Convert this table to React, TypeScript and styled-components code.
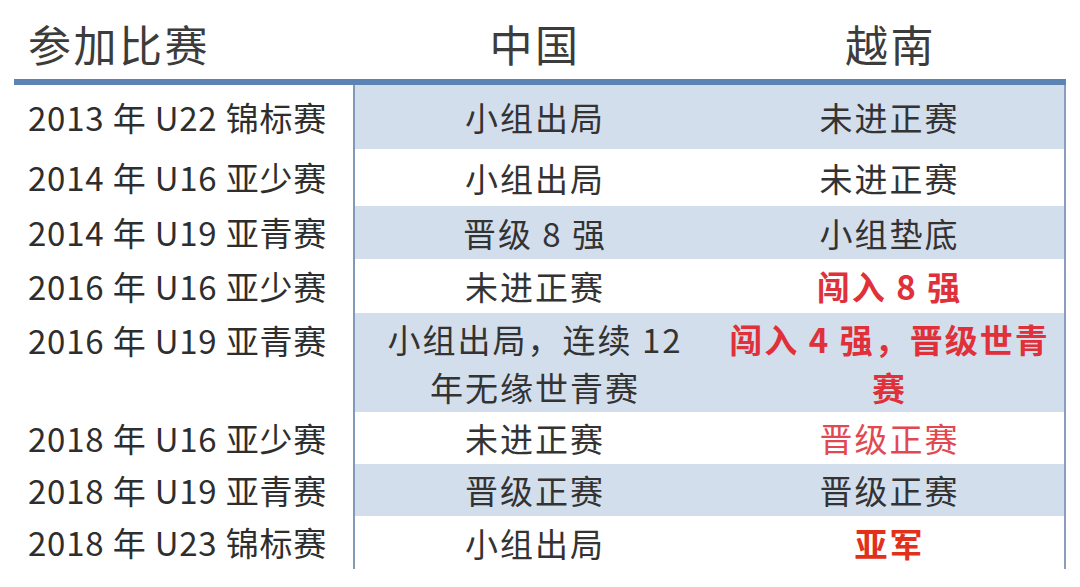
import React from "react";
import styled, { createGlobalStyle } from "styled-components";

const Global = createGlobalStyle`
  html, body { margin: 0; padding: 0; background: #ffffff; }
  body {
    font-family: "Noto Sans CJK SC", "Noto Sans", sans-serif;
    color: #333;
  }
`;

const Table = styled.div`
  margin-left: 14px;
  width: 1052px;
  display: grid;
  grid-template-columns: 341px 360px 351px;
`;

const HeadCell = styled.div<{ $align: "left" | "center" }>`
  height: 79px;
  display: flex;
  align-items: center;
  justify-content: ${(p) => (p.$align === "left" ? "flex-start" : "center")};
  padding-left: ${(p) => (p.$align === "left" ? "14px" : "0")};
  padding-top: 6px;
  box-sizing: border-box;
  font-size: 43px;
  color: #3c3c3c;
  letter-spacing: 2.5px;
`;

const Rule = styled.div`
  grid-column: 1 / span 3;
  height: 6px;
  background: #5b83b4;
`;

const LabelCell = styled.div<{ $h: number; $top?: boolean }>`
  height: ${(p) => p.$h}px;
  display: flex;
  align-items: ${(p) => (p.$top ? "flex-start" : "center")};
  padding-left: 14px;
  padding-top: ${(p) => (p.$top ? "6px" : "0")};
  box-sizing: border-box;
  font-size: 33px;
  letter-spacing: 0.8px;
  line-height: 43px;
  color: #2e2e2e;
  white-space: nowrap;
  border-right: 2px solid #8399b8;
`;

const DataCell = styled.div<{ $h: number; $band: boolean; $last?: boolean }>`
  height: ${(p) => p.$h}px;
  display: flex;
  flex-direction: column;
  align-items: center;
  justify-content: center;
  text-align: center;
  box-sizing: border-box;
  background: ${(p) => (p.$band ? "#d3deed" : "#ffffff")};
  border-right: ${(p) => (p.$last ? "2px solid #8a9dba" : "none")};
  font-size: 33px;
  letter-spacing: 2px;
  line-height: 48px;
  white-space: nowrap;
`;

const Txt = styled.span<{ $tone?: "red" | "pink" | "orange" }>`
  display: block;
  color: ${(p) =>
    p.$tone === "red"
      ? "#e0303a"
      : p.$tone === "pink"
      ? "#e24850"
      : p.$tone === "orange"
      ? "#e2311b"
      : "#333333"};
  font-weight: ${(p) => (p.$tone === "red" || p.$tone === "orange" ? 700 : 400)};
`;

type Tone = "red" | "pink" | "orange" | undefined;

const rows: {
  label: string;
  cn: string[];
  vn: string[];
  tone?: Tone;
  h: number;
}[] = [
  { label: "2013 年 U22 锦标赛", cn: ["小组出局"], vn: ["未进正赛"], h: 64 },
  { label: "2014 年 U16 亚少赛", cn: ["小组出局"], vn: ["未进正赛"], h: 57 },
  { label: "2014 年 U19 亚青赛", cn: ["晋级 8 强"], vn: ["小组垫底"], h: 53 },
  { label: "2016 年 U16 亚少赛", cn: ["未进正赛"], vn: ["闯入 8 强"], tone: "red", h: 54 },
  {
    label: "2016 年 U19 亚青赛",
    cn: ["小组出局，连续 12", "年无缘世青赛"],
    vn: ["闯入 4 强，晋级世青", "赛"],
    tone: "red",
    h: 99,
  },
  { label: "2018 年 U16 亚少赛", cn: ["未进正赛"], vn: ["晋级正赛"], tone: "pink", h: 52 },
  { label: "2018 年 U19 亚青赛", cn: ["晋级正赛"], vn: ["晋级正赛"], h: 52 },
  { label: "2018 年 U23 锦标赛", cn: ["小组出局"], vn: ["亚军"], tone: "orange", h: 53 },
];

export default function App() {
  return (
    <>
      <Global />
      <Table>
        <HeadCell $align="left">参加比赛</HeadCell>
        <HeadCell $align="center">中国</HeadCell>
        <HeadCell $align="center">越南</HeadCell>
        <Rule />
        {rows.map((r, i) => {
          const band = i % 2 === 0;
          return (
            <React.Fragment key={i}>
              <LabelCell $h={r.h} $top={r.h > 80}>
                {r.label}
              </LabelCell>
              <DataCell $h={r.h} $band={band}>
                {r.cn.map((t, j) => (
                  <Txt key={j}>{t}</Txt>
                ))}
              </DataCell>
              <DataCell $h={r.h} $band={band} $last>
                {r.vn.map((t, j) => (
                  <Txt key={j} $tone={r.tone}>
                    {t}
                  </Txt>
                ))}
              </DataCell>
            </React.Fragment>
          );
        })}
      </Table>
    </>
  );
}
